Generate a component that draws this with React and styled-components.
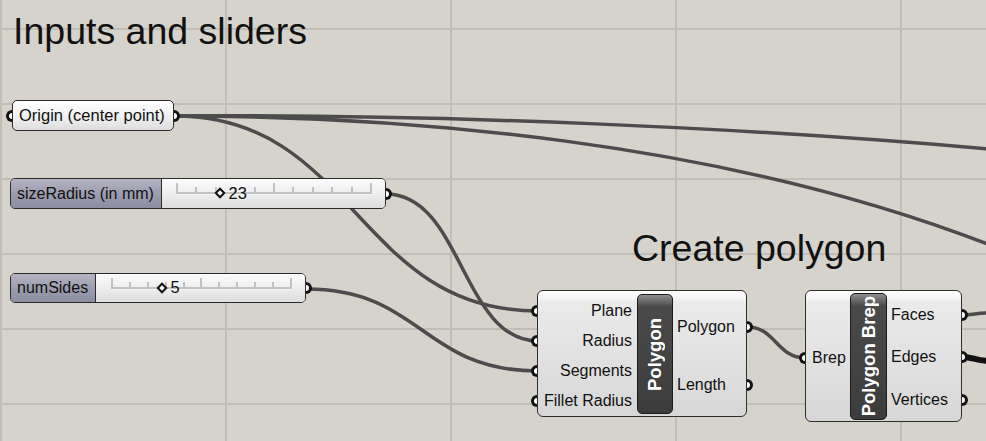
import React from "react";
import styled, { createGlobalStyle, css } from "styled-components";

const GlobalStyle = createGlobalStyle`
  html, body { margin: 0; padding: 0; background: #d6d2cc; }
  body { font-family: "Liberation Sans", Arial, sans-serif; overflow: hidden; }
`;

const Canvas = styled.div`
  position: relative;
  width: 986px;
  height: 441px;
  overflow: hidden;
  background-color: #d6d2cc;
  background-image: linear-gradient(to right, #c1bdb7 2px, transparent 2px),
    linear-gradient(to bottom, #c1bdb7 2px, transparent 2px);
  background-size: 225px 100%, 100% 75px;
  background-position: 0 0, 0 28px;
`;

const Wires = styled.svg`
  position: absolute;
  left: 0;
  top: 0;
  z-index: 0;
`;

const GroupTitle = styled.div`
  position: absolute;
  left: ${(p) => p.$x}px;
  top: ${(p) => p.$y}px;
  font-size: 37.5px;
  line-height: 38px;
  color: #111;
  white-space: nowrap;
`;

const Grip = styled.span`
  position: absolute;
  top: 50%;
  width: 3px;
  height: 6px;
  margin-top: -6px;
  border: 3px solid #111;
  background: #fff;
  ${(p) =>
    p.$side === "left"
      ? css`
          left: -7px;
          border-right: none;
          border-radius: 7px 0 0 7px;
        `
      : css`
          right: -7px;
          border-left: none;
          border-radius: 0 7px 7px 0;
        `}
`;

const ParamBox = styled.div`
  position: absolute;
  left: ${(p) => p.$x}px;
  top: ${(p) => p.$y}px;
  width: ${(p) => p.$w}px;
  height: ${(p) => p.$h}px;
  box-sizing: border-box;
  display: flex;
  align-items: center;
  padding-left: 6px;
  border: 1px solid #2b2b2b;
  border-radius: 5px;
  background: linear-gradient(#ffffff, #f3f3f3 45%, #dedede);
  font-size: 16.5px;
  color: #111;
  white-space: nowrap;
  z-index: 1;
`;

const Slider = styled.div`
  position: absolute;
  left: ${(p) => p.$x}px;
  top: ${(p) => p.$y}px;
  width: ${(p) => p.$w}px;
  height: ${(p) => p.$h}px;
  box-sizing: border-box;
  display: flex;
  border: 1px solid #2b2b2b;
  border-radius: 5px;
  z-index: 1;
`;

const SliderLabel = styled.div`
  width: ${(p) => p.$w}px;
  box-sizing: border-box;
  display: flex;
  align-items: center;
  padding-left: 6px;
  border-right: 1px solid #2b2b2b;
  border-radius: 4px 0 0 4px;
  background: linear-gradient(#b4b4c3, #9d9db0 50%, #8d8da1);
  font-size: 16px;
  color: #111;
  white-space: nowrap;
`;

const SliderBody = styled.div`
  position: relative;
  flex: 1;
  display: flex;
  align-items: center;
  padding: 0 13px 0 ${(p) => p.$padLeft}px;
  border-radius: 0 4px 4px 0;
  background: linear-gradient(#fbfbfb, #eeeeee 50%, #dddddd);
`;

const Track = styled.div`
  position: relative;
  flex: 1;
  height: 9px;
  margin-bottom: 10px;
  display: flex;
  justify-content: space-between;
  align-items: flex-end;
  border-bottom: 2px solid #c2c2c2;
  box-shadow: 0 1px 0 #f4f4f4;
`;

const Tick = styled.span`
  width: 2px;
  height: ${(p) => (p.$tall ? 9 : 5)}px;
  background: #c2c2c2;
`;

const Knob = styled.div`
  position: absolute;
  left: calc(${(p) => p.$at}% - 6px);
  bottom: -10px;
  height: 18px;
  display: flex;
  align-items: center;
  gap: 4px;
  font-size: 16.5px;
  color: #111;
`;

const Diamond = styled.span`
  width: 4px;
  height: 4px;
  margin-left: 2px;
  border: 2px solid #111;
  background: #f4f4f4;
  transform: rotate(45deg);
`;

const Component = styled.div`
  position: absolute;
  left: ${(p) => p.$x}px;
  top: ${(p) => p.$y}px;
  width: ${(p) => p.$w}px;
  height: ${(p) => p.$h}px;
  box-sizing: border-box;
  display: flex;
  border: 1px solid #2e2e2e;
  border-radius: 6px;
  background: linear-gradient(#ffffff 0, #f4f4f4 8px, #ebebeb 10px, #d7d7d7 100%);
  z-index: 1;
`;

const PortColumn = styled.div`
  display: flex;
  flex-direction: column;
  width: ${(p) => (p.$w ? `${p.$w}px` : "auto")};
  flex: ${(p) => (p.$w ? "none" : 1)};
  box-sizing: border-box;
  padding-top: ${(p) => p.$top}px;
`;

const PortRow = styled.div`
  position: relative;
  height: ${(p) => p.$h}px;
  display: flex;
  align-items: center;
  justify-content: ${(p) => (p.$side === "left" ? "flex-end" : "flex-start")};
  padding: ${(p) => (p.$side === "left" ? `0 ${p.$gap}px 0 0` : `0 0 0 ${p.$gap}px`)};
  font-size: 16px;
  color: #111;
  white-space: nowrap;
`;

const Bar = styled.div`
  width: ${(p) => p.$w}px;
  box-sizing: border-box;
  margin: ${(p) => p.$m};
  display: flex;
  align-items: center;
  justify-content: center;
  border: 1px solid #1c1c1c;
  border-radius: 5px;
  background: linear-gradient(#8e8e8e 0, #606060 8px, #4a4a4a 12px, #3c3c3c 100%);
`;

const BarText = styled.span`
  writing-mode: vertical-rl;
  transform: rotate(180deg);
  color: #fff;
  font-weight: bold;
  font-size: 18.5px;
  white-space: nowrap;
`;

const ticks = [true, false, false, false, false, true, false, false, false, false, true];

const NumberSlider = ({ x, y, w, h, labelW, padLeft, name, value, at }) => (
  <Slider $x={x} $y={y} $w={w} $h={h}>
    <SliderLabel $w={labelW}>{name}</SliderLabel>
    <SliderBody $padLeft={padLeft}>
      <Track>
        {ticks.map((t, i) => (
          <Tick key={i} $tall={t} />
        ))}
        <Knob $at={at}>
          <Diamond />
          {value}
        </Knob>
      </Track>
      <Grip $side="right" />
    </SliderBody>
  </Slider>
);

const wires = [
  { d: "M175,116 C355,116 357,311 538,311" },
  { d: "M175,116 C450,114 750,128 990,149" },
  { d: "M175,116 C400,116 720,140 990,245" },
  { d: "M386,194 C462,194 462,341 538,341" },
  { d: "M306,289 C422,289 422,371 538,371" },
  { d: "M747,327 C776,327 776,358 806,358" },
  { d: "M961,315 C975,315 975,313 990,313" },
  { d: "M961,357 C975,357 975,361 990,361", heavy: true },
];

export default function App() {
  return (
    <>
      <GlobalStyle />
      <Canvas>
        <Wires width="986" height="441">
          {wires.map((w, i) => (
            <path
              key={i}
              d={w.d}
              fill="none"
              stroke={w.heavy ? "#111" : "#4c4c4c"}
              strokeWidth={w.heavy ? 6 : 3.5}
            />
          ))}
        </Wires>

        <GroupTitle $x={13} $y={12}>Inputs and sliders</GroupTitle>
        <GroupTitle $x={632} $y={229}>Create polygon</GroupTitle>

        <ParamBox $x={12} $y={100} $w={162} $h={31}>
          <Grip $side="left" />
          Origin (center point)
          <Grip $side="right" />
        </ParamBox>

        <NumberSlider x={10} y={178} w={376} h={31} labelW={151} padLeft={14} name="sizeRadius (in mm)" value="23" at={22.7} />
        <NumberSlider x={10} y={273} w={296} h={30} labelW={85} padLeft={15} name="numSides" value="5" at={28.4} />

        <Component $x={537} $y={290} $w={210} $h={127}>
          <PortColumn $w={99} $top={5}>
            {["Plane", "Radius", "Segments", "Fillet Radius"].map((n) => (
              <PortRow key={n} $h={30} $side="left" $gap={5}>
                <Grip $side="left" />
                {n}
              </PortRow>
            ))}
          </PortColumn>
          <Bar $w={36} $m="3px 0 2px">
            <BarText>Polygon</BarText>
          </Bar>
          <PortColumn $top={7}>
            {["Polygon", "Length"].map((n) => (
              <PortRow key={n} $h={58} $side="right" $gap={4}>
                {n}
                <Grip $side="right" />
              </PortRow>
            ))}
          </PortColumn>
        </Component>

        <Component $x={805} $y={290} $w={157} $h={132}>
          <PortColumn $w={44} $top={46}>
            <PortRow $h={42} $side="right" $gap={6}>
              <Grip $side="left" />
              Brep
            </PortRow>
          </PortColumn>
          <Bar $w={37} $m="2px 0 1px">
            <BarText>Polygon Brep</BarText>
          </Bar>
          <PortColumn $top={3}>
            {["Faces", "Edges", "Vertices"].map((n) => (
              <PortRow key={n} $h={42.5} $side="right" $gap={4}>
                {n}
                <Grip $side="right" />
              </PortRow>
            ))}
          </PortColumn>
        </Component>
      </Canvas>
    </>
  );
}
